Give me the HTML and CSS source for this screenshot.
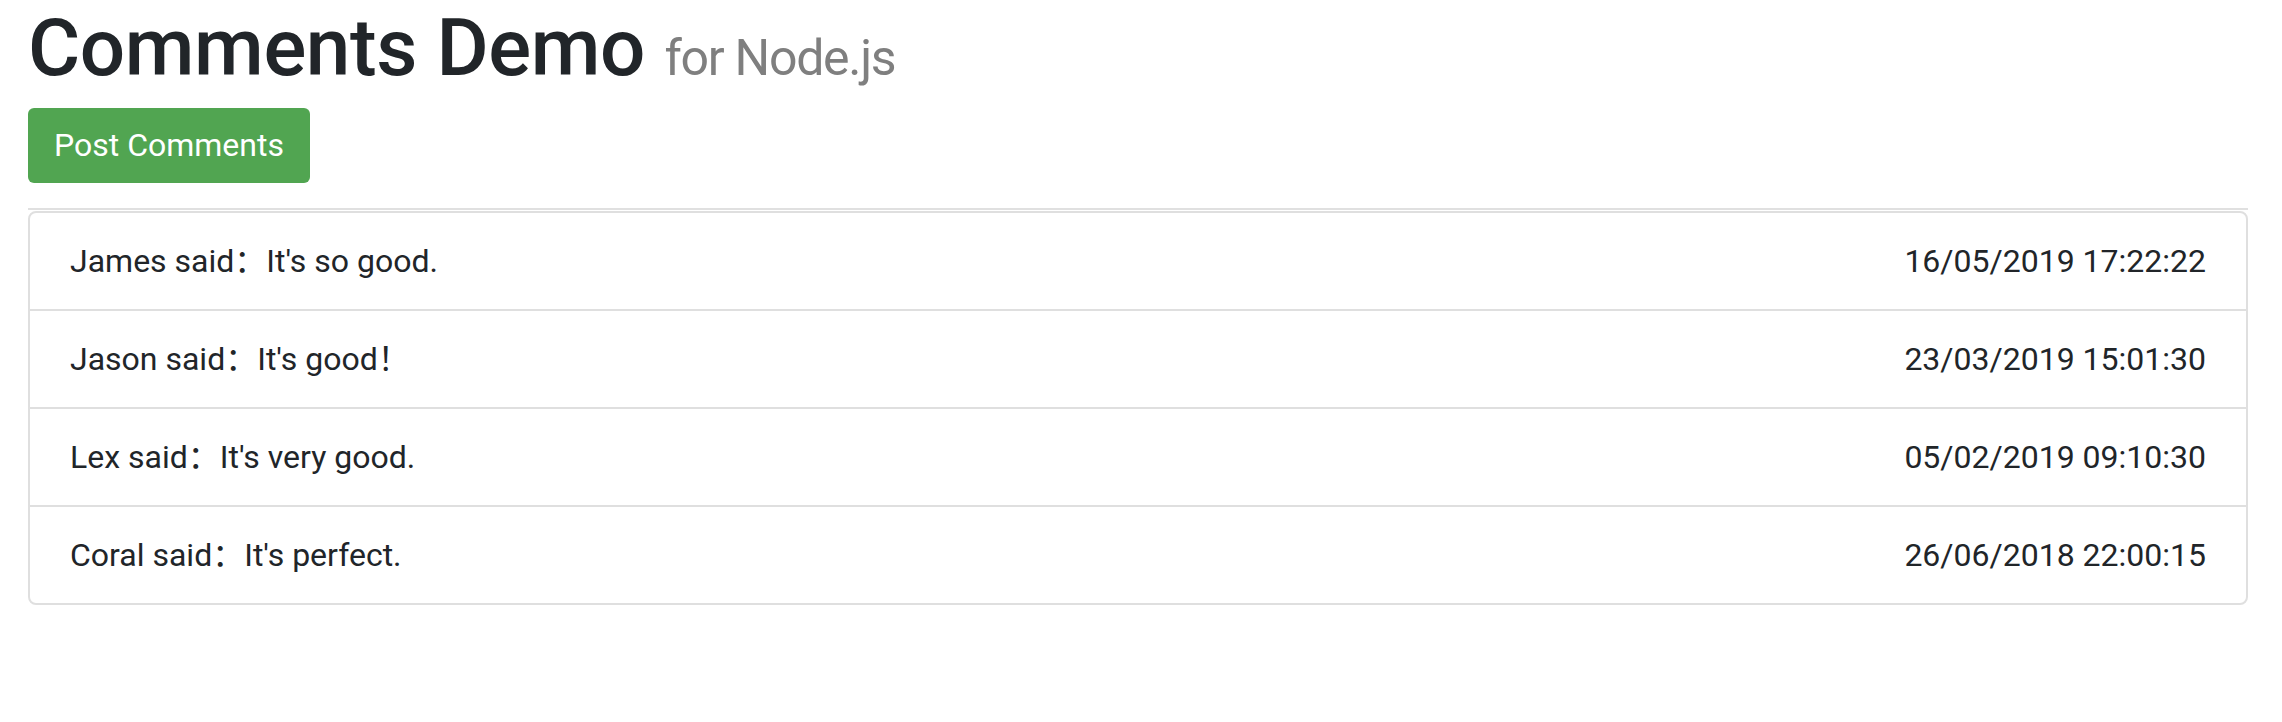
FILE: index.html
```html
<!DOCTYPE html>
<html>
<head>
<meta charset="utf-8">
<link rel="stylesheet" href="styles.css">
</head>
<body>
<div class="container">
  <h1 class="title">Comments Demo <small class="sub">for Node.js</small></h1>
  <a class="btn-post" href="#">Post Comments</a>
  <hr class="divider">
  <ul class="list">
    <li class="item"><span class="text">James said：It's so good.</span><span class="date">16/05/2019 17:22:22</span></li>
    <li class="item"><span class="text">Jason said：It's good！</span><span class="date">23/03/2019 15:01:30</span></li>
    <li class="item"><span class="text">Lex said：It's very good.</span><span class="date">05/02/2019 09:10:30</span></li>
    <li class="item"><span class="text">Coral said：It's perfect.</span><span class="date">26/06/2018 22:00:15</span></li>
  </ul>
</div>
</body>
</html>
```

FILE: styles.css
```css
* { box-sizing: border-box; }
html, body { margin: 0; padding: 0; background: #fff; }
body {
  font-family: Roboto, "Noto Sans CJK SC", sans-serif;
  color: #212529;
  font-size: 32px;
  line-height: 48px;
}
.container {
  padding: 0 34px 0 28px;
  display: flex;
  flex-direction: column;
  align-items: flex-start;
}
.title {
  margin: 0 0 12px 0;
  font-size: 80px;
  font-weight: 500;
  line-height: 96px;
  letter-spacing: -0.4px;
}
.sub {
  font-size: 50px;
  font-weight: 400;
  line-height: 1;
  letter-spacing: -1.3px;
  color: #7f7f7f;
}
.btn-post {
  display: inline-block;
  background: #51a551;
  color: #fff;
  text-decoration: none;
  border-radius: 6px;
  padding: 13px 26px 14px 26px;
  font-size: 32px;
  line-height: 48px;
}
.divider {
  width: 100%;
  margin: 25px 0 1px 0;
  border: 0;
  border-top: 2px solid #e0e0e0;
}
.list {
  width: 100%;
  list-style: none;
  margin: 0;
  padding: 0;
  border: 2px solid #dfdfdf;
  border-radius: 8px;
}
.item {
  display: flex;
  justify-content: space-between;
  padding: 24px 40px 24px 40px;
  border-top: 2px solid #dfdfdf;
}
.item:first-child { border-top: 0; }
```
